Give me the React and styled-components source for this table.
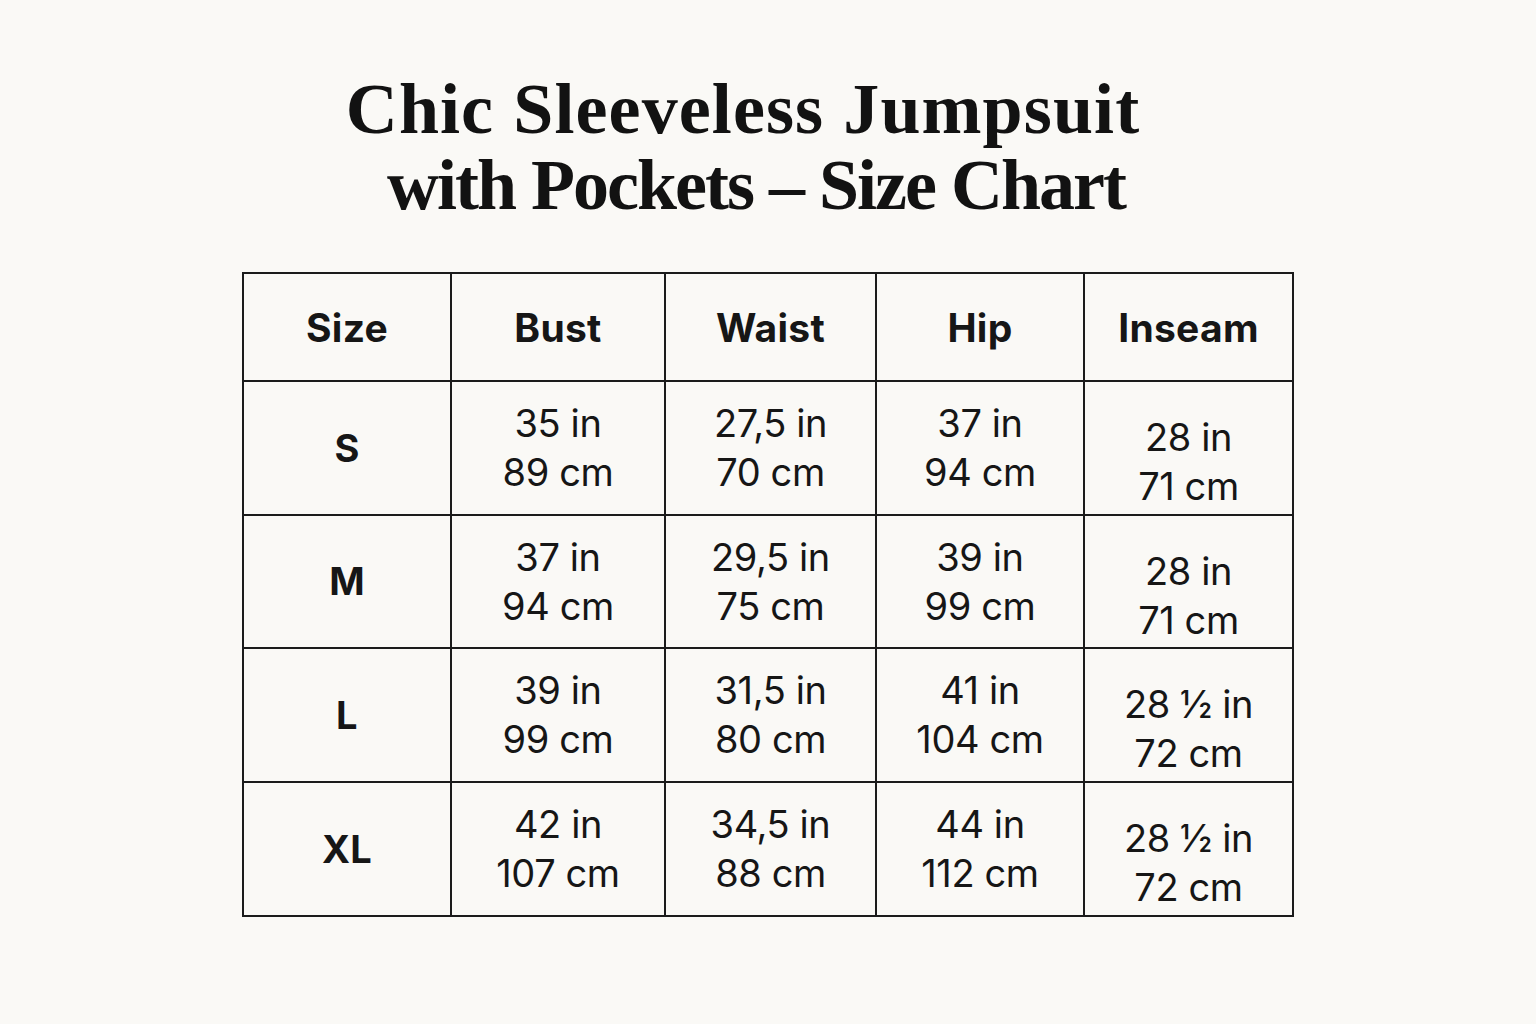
import React from "react";
import styled, { createGlobalStyle } from "styled-components";

const GlobalStyle = createGlobalStyle`
  html, body {
    margin: 0;
    padding: 0;
    background: #faf9f6;
  }
  * {
    box-sizing: border-box;
  }
`;

const Page = styled.div`
  width: 1536px;
  min-height: 1024px;
  display: flex;
  flex-direction: column;
  align-items: center;
  padding-top: 71px;
  background: #faf9f6;
`;

const Title = styled.h1`
  margin: 0;
  width: 100%;
  font-family: "Liberation Serif", "Times New Roman", serif;
  font-weight: 700;
  font-size: 72px;
  line-height: 76px;
  color: #121212;
  text-align: center;
`;

// the two title lines are set a little differently in the chart artwork
const TitleLine = styled.span`
  display: block;
  white-space: nowrap;
  letter-spacing: ${(props) => props.spacing};
  padding-right: ${(props) => props.shift};
`;

const Chart = styled.div`
  margin-top: 49px;
  display: grid;
  grid-template-columns: 208px 214px 211px 208px 209px;
  grid-template-rows: 108px 134px 133px 134px 134px;
  border-top: 2px solid #1b1b1b;
  border-left: 2px solid #1b1b1b;
  font-family: Inter, "Liberation Sans", sans-serif;
  color: #161616;
`;

const Cell = styled.div`
  display: flex;
  flex-direction: column;
  align-items: center;
  justify-content: center;
  border-right: 2px solid #1b1b1b;
  border-bottom: 2px solid #1b1b1b;
  padding-top: ${(props) => (props.low ? "28px" : "0")};
  font-size: ${(props) => (props.head ? "39px" : "38px")};
  line-height: 49px;
  font-weight: ${(props) => (props.bold ? 700 : 400)};
  letter-spacing: ${(props) => (props.bold ? "0.3px" : "-0.4px")};
`;

const Line = styled.span`
  white-space: nowrap;
`;

const headers = ["Size", "Bust", "Waist", "Hip", "Inseam"];

const rows = [
  ["S", ["35 in", "89 cm"], ["27,5 in", "70 cm"], ["37 in", "94 cm"], ["28 in", "71 cm"]],
  ["M", ["37 in", "94 cm"], ["29,5 in", "75 cm"], ["39 in", "99 cm"], ["28 in", "71 cm"]],
  ["L", ["39 in", "99 cm"], ["31,5 in", "80 cm"], ["41 in", "104 cm"], ["28 ½ in", "72 cm"]],
  ["XL", ["42 in", "107 cm"], ["34,5 in", "88 cm"], ["44 in", "112 cm"], ["28 ½ in", "72 cm"]],
];

const App = () => {
  return (
    <Page>
      <GlobalStyle />
      <Title>
        <TitleLine spacing="1.1px" shift="50px">
          Chic Sleeveless Jumpsuit
        </TitleLine>
        <TitleLine spacing="-2px" shift="24px">
          with Pockets – Size Chart
        </TitleLine>
      </Title>
      <Chart>
        {headers.map((h) => (
          <Cell key={h} bold head>
            {h}
          </Cell>
        ))}
        {rows.map(([size, ...values]) => (
          <React.Fragment key={size}>
            <Cell bold>{size}</Cell>
            {values.map((v, i) => (
              <Cell key={i} low={i === 3}>
                <Line>{v[0]}</Line>
                <Line>{v[1]}</Line>
              </Cell>
            ))}
          </React.Fragment>
        ))}
      </Chart>
    </Page>
  );
};

export default App;
